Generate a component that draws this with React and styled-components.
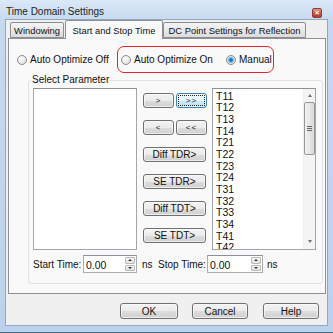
import React from "react";
import styled, { createGlobalStyle } from "styled-components";

const GlobalStyle = createGlobalStyle`
  html, body { margin: 0; padding: 0; background: #ffffff; }
  body {
    font-family: "Liberation Sans", Arial, sans-serif;
    font-size: 10px;
    color: #111111;
  }
  * { box-sizing: border-box; }
`;

const Window = styled.div`
  width: 333px;
  height: 333px;
  display: flex;
  flex-direction: column;
  background: linear-gradient(#dbe8f6, #c6daef 20px, #bcd2ec);
  border-bottom: 1px solid #3f6d7c;
`;

const TitleBar = styled.div`
  height: 19px;
  padding: 6px 11px 0 6px;
  display: flex;
  justify-content: space-between;
  align-items: flex-start;
  font-size: 10px;
  color: #1e1e1e;
`;

const CloseBox = styled.div`
  width: 10px;
  height: 10px;
  margin-top: 2px;
  border: 1px solid #8d3b33;
  border-radius: 2px;
  background: linear-gradient(#e39a8f, #c9564a 50%, #b7392c);
  color: #fff;
  font-size: 8px;
  line-height: 8px;
  text-align: center;
  font-weight: bold;
`;

const Client = styled.div`
  flex: 1;
  margin: 0 5px 6px 5px;
  border: 1px solid #92a8c2;
  background: #f0f0f0;
  padding: 0 1px 0 2px;
  display: flex;
  flex-direction: column;
`;

const TabStrip = styled.div`
  height: 18px;
  padding-left: 2px;
  display: flex;
  align-items: flex-end;
  position: relative;
  z-index: 1;
`;

const Tab = styled.div`
  width: ${(p) => p.$w}px;
  height: ${(p) => (p.$active ? 19 : 16)}px;
  margin-left: ${(p) => p.$ml || 0}px;
  margin-bottom: ${(p) => (p.$active ? -1 : 0)}px;
  border: 1px solid #8c8e94;
  border-bottom: ${(p) => (p.$active ? "none" : "1px solid #8c8e94")};
  border-radius: 2px 2px 0 0;
  background: ${(p) =>
    p.$active ? "#f9f9f9" : "linear-gradient(#f4f4f4, #e9e9e9 50%, #dcdcdc)"};
  padding-top: ${(p) => (p.$active ? 4 : 2)}px;
  font-size: 9.4px;
  text-align: center;
  white-space: nowrap;
  overflow: hidden;
`;

const Panel = styled.div`
  height: 256px;
  border: 1px solid #8f9195;
  background: #f9f9f9;
  padding: 7px 0 0 8px;
  display: flex;
  flex-direction: column;
`;

const RadioRow = styled.div`
  display: flex;
  align-items: center;
  height: 27px;
`;

const RadioItem = styled.div`
  width: ${(p) => p.$w}px;
  display: flex;
  align-items: center;
  gap: 3px;
  white-space: nowrap;
`;

const RadioDot = styled.span`
  width: 10px;
  height: 10px;
  border-radius: 50%;
  border: 1px solid #8c8c8c;
  flex: none;
  background: ${(p) =>
    p.$on
      ? "radial-gradient(circle, #135f9f 0, #2f8fd8 1.6px, #8fcdf2 2.8px, #e2e2e2 3.4px, #f6f6f6 100%)"
      : "radial-gradient(circle at 40% 35%, #ffffff, #d6d6d6)"};
`;

const RedBox = styled.div`
  width: 157px;
  height: 27px;
  border: 1.5px solid #e2262e;
  border-radius: 7px;
  padding-left: 3px;
  display: flex;
  align-items: center;
`;

const Group = styled.fieldset`
  margin: 1px 0 0 11px;
  width: 295px;
  border: 1px solid #dde3e8;
  border-radius: 3px;
  padding: 2px 6px 10px 4px;
  min-width: 0;
`;

const Legend = styled.legend`
  padding: 0 1px;
  margin-left: -2px;
  line-height: 12px;
`;

const Lists = styled.div`
  display: flex;
  align-items: flex-start;
`;

const ListBox = styled.div`
  width: 104px;
  height: 162px;
  border: 1px solid #a2a5aa;
  border-top-color: #8b8e93;
  background: #ffffff;
  display: flex;
  overflow: hidden;
`;

const Items = styled.div`
  flex: 1;
  padding: 1.5px 0 0 3px;
  line-height: 11.67px;
  font-size: 10.5px;
  color: #111;
`;

const ScrollBar = styled.div`
  width: 12px;
  background: #f4f4f4;
  border-left: 1px solid #eeeeee;
  display: flex;
  flex-direction: column;
  align-items: center;
`;

const Arrow = styled.div`
  width: 0;
  height: 0;
  margin: ${(p) => (p.$down ? "auto 0 6px" : "5px 0 0")};
  border-left: 2.5px solid transparent;
  border-right: 2.5px solid transparent;
  border-${(p) => (p.$down ? "top" : "bottom")}: 3px solid #707070;
`;

const Thumb = styled.div`
  width: 11px;
  height: 53px;
  margin-top: 5px;
  border: 1px solid #979797;
  border-radius: 2px;
  background: linear-gradient(90deg, #f3f3f3, #e6e6e6 50%, #d8d8d8);
  display: flex;
  flex-direction: column;
  justify-content: center;
  align-items: center;
  gap: 1px;
`;

const Grip = styled.span`
  width: 5px;
  height: 1px;
  background: #666;
`;

const ButtonCol = styled.div`
  width: 64px;
  margin: 0 5px 0 6px;
  padding-top: 5px;
  display: flex;
  flex-direction: column;
  gap: 12px;
`;

const Pair = styled.div`
  display: flex;
  gap: 2px;
`;

const Btn = styled.div`
  width: ${(p) => p.$w}px;
  height: ${(p) => p.$h || 15}px;
  margin-left: ${(p) => p.$ml || 0}px;
  border: 1px solid ${(p) => (p.$focus ? "#3c7fb1" : "#707070")};
  border-radius: 3px;
  background: ${(p) =>
    p.$focus
      ? "linear-gradient(#f1f9fe, #e3f3fc 50%, #cdeafb 51%, #bfe3f8)"
      : "linear-gradient(#f3f3f3, #ebebeb 50%, #dddddd 51%, #d0d0d0)"};
  box-shadow: inset 0 0 0 1px rgba(255, 255, 255, 0.6);
  outline: ${(p) => (p.$focus ? "1px dotted #222" : "none")};
  outline-offset: -3px;
  display: flex;
  align-items: center;
  justify-content: center;
  font-size: ${(p) => (p.$small ? 8 : 10)}px;
  letter-spacing: ${(p) => (p.$small ? 1 : 0)}px;
  color: #111;
  white-space: nowrap;
`;

const TimeRow = styled.div`
  margin-top: 5px;
  display: flex;
  align-items: center;
`;

const Label = styled.span`
  width: ${(p) => p.$w}px;
  padding-left: ${(p) => p.$pl || 0}px;
  white-space: nowrap;
`;

const Field = styled.div`
  width: ${(p) => p.$w}px;
  height: 18px;
  border: 1px solid #abadb3;
  border-top-color: #8d9096;
  background: #ffffff;
  display: flex;
`;

const FieldText = styled.span`
  flex: 1;
  padding: 3px 0 0 2px;
  font-size: 10.5px;
`;

const Spin = styled.div`
  width: 11px;
  display: flex;
  flex-direction: column;
  gap: 1px;
  padding: 1px 1px 1px 0;
`;

const SpinHalf = styled.div`
  flex: 1;
  border: 1px solid #b9b9b9;
  border-radius: 1px;
  background: linear-gradient(#f6f6f6, #e2e2e2);
  display: flex;
  align-items: center;
  justify-content: center;
  &::after {
    content: "";
    border-left: 2px solid transparent;
    border-right: 2px solid transparent;
    border-${(p) => (p.$down ? "top" : "bottom")}: 2px solid #333;
  }
`;

const ButtonRow = styled.div`
  flex: 1;
  padding: 9px 0 0 112px;
  display: flex;
  align-items: flex-start;
`;

const params = [
  "T11", "T12", "T13", "T14", "T21", "T22", "T23", "T24",
  "T31", "T32", "T33", "T34", "T41", "T42",
];

const TimeField = ({ w }) => (
  <Field $w={w}>
    <FieldText>0.00</FieldText>
    <Spin>
      <SpinHalf />
      <SpinHalf $down />
    </Spin>
  </Field>
);

const App = () => {
  return (
    <Window>
      <GlobalStyle />
      <TitleBar>
        <span>Time Domain Settings</span>
        <CloseBox>×</CloseBox>
      </TitleBar>
      <Client>
        <TabStrip>
          <Tab $w={54}>Windowing</Tab>
          <Tab $w={98} $ml={1} $active>
            Start and Stop Time
          </Tab>
          <Tab $w={143}>DC Point Settings for Reflection</Tab>
        </TabStrip>
        <Panel>
          <RadioRow>
            <RadioItem $w={100}>
              <RadioDot />
              Auto Optimize Off
            </RadioItem>
            <RedBox>
              <RadioItem $w={105}>
                <RadioDot />
                Auto Optimize On
              </RadioItem>
              <RadioItem $w={44}>
                <RadioDot $on />
                Manual
              </RadioItem>
            </RedBox>
          </RadioRow>
          <Group>
            <Legend>Select Parameter</Legend>
            <Lists>
              <ListBox />
              <ButtonCol>
                <Pair>
                  <Btn $w={31} $small>&gt;</Btn>
                  <Btn $w={31} $small $focus>&gt;&gt;</Btn>
                </Pair>
                <Pair>
                  <Btn $w={31} $small>&lt;</Btn>
                  <Btn $w={31} $small>&lt;&lt;</Btn>
                </Pair>
                <Btn $w={63}>Diff TDR&gt;</Btn>
                <Btn $w={63}>SE TDR&gt;</Btn>
                <Btn $w={63}>Diff TDT&gt;</Btn>
                <Btn $w={63}>SE TDT&gt;</Btn>
              </ButtonCol>
              <ListBox>
                <Items>
                  {params.map((p) => (
                    <div key={p}>{p}</div>
                  ))}
                </Items>
                <ScrollBar>
                  <Arrow />
                  <Thumb>
                    <Grip />
                    <Grip />
                    <Grip />
                  </Thumb>
                  <Arrow $down />
                </ScrollBar>
              </ListBox>
            </Lists>
            <TimeRow>
              <Label $w={50}>Start Time:</Label>
              <TimeField w={54} />
              <Label $w={21} $pl={5}>ns</Label>
              <Label $w={49}>Stop Time:</Label>
              <TimeField w={56} />
              <Label $w={20} $pl={4}>ns</Label>
            </TimeRow>
          </Group>
        </Panel>
        <ButtonRow>
          <Btn $w={58} $h={16}>OK</Btn>
          <Btn $w={56} $h={16} $ml={14}>Cancel</Btn>
          <Btn $w={56} $h={16} $ml={15}>Help</Btn>
        </ButtonRow>
      </Client>
    </Window>
  );
};

export default App;
